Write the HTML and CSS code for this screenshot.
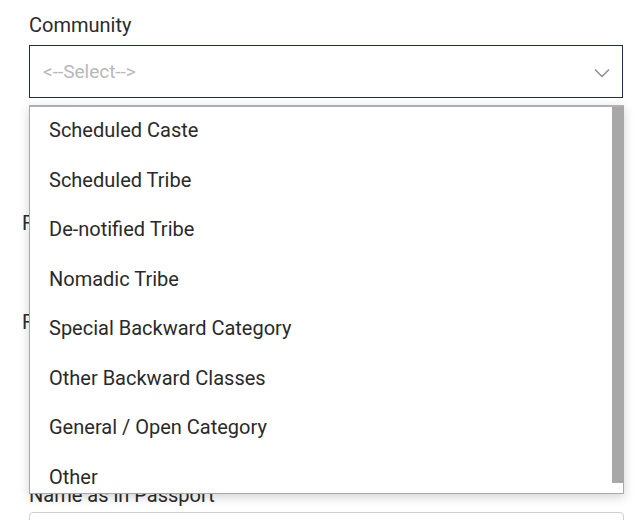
FILE: index.html
```html
<!DOCTYPE html>
<html lang="en">
<head>
<meta charset="utf-8">
<title>Community</title>
<link rel="stylesheet" href="styles.css">
</head>
<body>
<div class="page">
<div class="form">
  <label class="label">Community</label>
  <div class="select">
    <span class="placeholder">&lt;--Select--&gt;</span>
    <svg class="chevron" width="16" height="10" viewBox="0 0 16 10"><path d="M1 1.5 L8 8.5 L15 1.5" fill="none" stroke="#8a8a8a" stroke-width="1.4"/></svg>
  </div>
  <label class="label hidden-label first">Father's Name</label>
  <label class="label hidden-label second">Family Income</label>
  <label class="label name-label">Name as in Passport</label>
  <div class="input"></div>

  <div class="dropdown">
    <ul class="options">
      <li>Scheduled Caste</li>
      <li>Scheduled Tribe</li>
      <li>De-notified Tribe</li>
      <li>Nomadic Tribe</li>
      <li>Special Backward Category</li>
      <li>Other Backward Classes</li>
      <li>General / Open Category</li>
      <li>Other</li>
    </ul>
    <div class="scrollbar"><div class="thumb"></div></div>
  </div>
</div>
</div>
</body>
</html>
```

FILE: styles.css
```css
html, body {
  margin: 0;
  padding: 0;
  background: #ffffff;
  overflow: hidden;
}
body {
  font-family: Roboto, "Liberation Sans", sans-serif;
  color: #2b2b2b;
}
.page {
  width: 640px;
  height: 520px;
  overflow: hidden;
}
.form {
  position: relative;
  display: flex;
  flex-direction: column;
  margin-left: 29px;
  width: 595px;
  padding-top: 13px;
}
.label {
  display: block;
  font-size: 20px;
  line-height: 24px;
  height: 24px;
  color: #2b2b2b;
}
.select {
  margin-top: 8px;
  height: 51px;
  border: 1px solid #1f2d4e;
  display: flex;
  align-items: center;
  justify-content: space-between;
  padding: 0 12px 0 13px;
  box-sizing: content-box;
  width: 567px;
}
.placeholder {
  font-size: 19px;
  color: #b8b8b8;
}
.chevron {
  display: block;
  margin-top: 2px;
}
.hidden-label {
  margin-left: -7px;
}
.first {
  margin-top: 113px;
}
.second {
  margin-top: 75px;
}
.name-label {
  margin-top: 149px;
}
.input {
  margin-top: 5px;
  height: 40px;
  width: 593px;
  border: 1px solid #cfcfcf;
  border-radius: 4px;
}
.dropdown {
  position: absolute;
  top: 105px;
  left: 0;
  width: 593px;
  height: 386px;
  border: 1px solid #a9a9a9;
  border-top: 2px solid #b0b0b0;
  background: #ffffff;
  box-shadow: 0 3px 10px rgba(0, 0, 0, 0.18);
  display: flex;
  overflow: hidden;
}
.options {
  list-style: none;
  margin: 0;
  padding: 0;
  flex: 1;
}
.options li {
  height: 49.5px;
  line-height: 47px;
  padding-left: 19px;
  font-size: 20px;
  color: #2a2a2a;
  white-space: nowrap;
}
.scrollbar {
  width: 11px;
  display: flex;
  flex-direction: column;
  padding-bottom: 10px;
}
.thumb {
  flex: 1;
  background: #a8a8a8;
}
```
